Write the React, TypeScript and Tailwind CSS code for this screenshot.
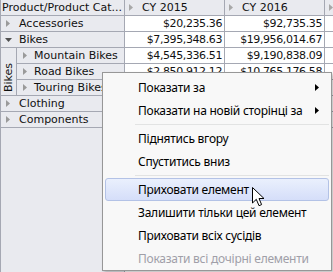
import React from "react";

const border = "border-[#a5a8b3]";

const RightTri = ({ color = "#9a9a9a" }: { color?: string }) => (
  <svg width="4" height="7" viewBox="0 0 4 7" className="shrink-0">
    <path d="M0 0 L4 3.5 L0 7 Z" fill={color} />
  </svg>
);

const DownTri = () => (
  <svg width="7" height="4" viewBox="0 0 7 4" className="shrink-0">
    <path d="M0 0 L7 0 L3.5 4 Z" fill="#505050" />
  </svg>
);

const RowLabel = ({ label, open }: { label: string; open?: boolean }) => (
  <div
    className={`flex h-[16px] items-center border-b ${border} bg-[#e9eaef] pl-[5px]`}
  >
    {open ? (
      <span className="ml-[-1px] mr-[7px]">
        <DownTri />
      </span>
    ) : (
      <span className="mr-[9px]">
        <RightTri />
      </span>
    )}
    <span className="whitespace-nowrap leading-none">{label}</span>
  </div>
);

const SubLabel = ({ label }: { label: string }) => (
  <div
    className={`flex h-[16px] items-center border-b ${border} bg-[#e9eaef] pl-[6px]`}
  >
    <span className="mr-[7px]">
      <RightTri />
    </span>
    <span className="whitespace-nowrap leading-none">{label}</span>
  </div>
);

const rows = [
  ["$20,235.36", "$92,735.35"],
  ["$7,395,348.63", "$19,956,014.67"],
  ["$4,545,336.51", "$9,190,838.09"],
  ["$2,850,912.12", "$10,765,176.58"],
  ["$1,481,100.12", "$3,879,178.92"],
  ["$34,376.34", "$1,015,398.44"],
  ["$11,799.08", "$1,424,117.29"],
];

const menuItems: (string | { label: string; sub?: boolean; hot?: boolean; off?: boolean })[] = [
  { label: "Показати за", sub: true },
  { label: "Показати на новій сторінці за", sub: true },
  "sep",
  { label: "Піднятись вгору" },
  { label: "Спуститись вниз" },
  "sep",
  { label: "Приховати елемент", hot: true },
  { label: "Залишити тільки цей елемент" },
  { label: "Приховати всіх сусідів" },
  { label: "Показати всі дочірні елементи", off: true },
];

const Cursor = () => (
  <svg width="13" height="20" viewBox="0 0 13 20">
    <path
      d="M0.5 0.5 L0.5 16 L4.3 12.3 L7 18.7 L9.6 17.6 L7 11.5 L12 11.5 Z"
      fill="#fff"
      stroke="#000"
      strokeWidth="1"
      strokeLinejoin="miter"
    />
  </svg>
);

export default function App() {
  return (
    <div className="relative h-[272px] w-[333px] overflow-hidden bg-white text-[11px] text-[#111] font-['DejaVu_Sans',sans-serif]">
      <div className="flex h-full">
        {/* row headers */}
        <div className={`flex w-[125px] shrink-0 flex-col border-r ${border} border-l bg-[#e9eaef]`}>
          <div className={`flex h-[16px] items-center border-b ${border} pl-[1px]`}>
            <span className="whitespace-nowrap leading-none">Product/Product Cat...</span>
          </div>
          <RowLabel label="Accessories" />
          <RowLabel label="Bikes" open />
          <div className="flex">
            <div
              className={`flex h-[48px] w-[16px] shrink-0 flex-col items-center justify-end border-r border-b ${border} pb-[3px]`}
            >
              <span className="rotate-180 leading-none [writing-mode:vertical-rl]">Bikes</span>
            </div>
            <div className="flex flex-1 flex-col">
              <SubLabel label="Mountain Bikes" />
              <SubLabel label="Road Bikes" />
              <SubLabel label="Touring Bikes" />
            </div>
          </div>
          <RowLabel label="Clothing" />
          <RowLabel label="Components" />
          <div className="flex-1" />
        </div>

        {/* data */}
        <div className="flex flex-1 flex-col">
          <div className={`flex h-[16px] border-b ${border} bg-[#e9eaef]`}>
            {["CY 2015", "CY 2016"].map((h) => (
              <div
                key={h}
                className={`flex w-[100px] shrink-0 items-center border-r ${border} pl-[4px]`}
              >
                <span className="mr-[9px]">
                  <RightTri color="#a8a8a8" />
                </span>
                <span className="whitespace-nowrap leading-none">{h}</span>
              </div>
            ))}
            <div className="flex flex-1 items-center pl-[4px]">
              <RightTri color="#a8a8a8" />
            </div>
          </div>
          {rows.map((r, i) => (
            <div key={i} className={`flex h-[16px] border-b ${border}`}>
              {r.map((v, j) => (
                <div
                  key={j}
                  className={`flex w-[100px] shrink-0 items-center justify-end border-r ${border} pr-[2px] tracking-[-0.4px]`}
                >
                  <span className="whitespace-nowrap leading-none">{v}</span>
                </div>
              ))}
              <div className="flex-1" />
            </div>
          ))}
        </div>
      </div>

      {/* context menu */}
      <div className="absolute left-[102px] top-[72px] w-[230px] border border-[#979797] bg-[#f8f8f8] pt-[3px] shadow-[2px_2px_3px_rgba(0,0,0,0.25)] font-['Noto_Sans',sans-serif] text-[12px] tracking-[-0.25px]">
        {menuItems.map((m, i) => {
          if (m === "sep")
            return (
              <div key={i} className="flex h-[5px] items-center pl-[32px] pr-[2px]">
                <div className="h-px w-full bg-[#e2e3e3]" />
              </div>
            );
          if (typeof m === "string") return null;
          return (
            <div
              key={i}
              className={`mx-[2px] flex h-[23px] items-center rounded-[3px] border pl-[32px] pr-[9px] ${
                m.hot
                  ? "border-[#b3c2e6] bg-gradient-to-b from-[#eaf0fd] to-[#d5def9]"
                  : "border-transparent"
              } ${m.off ? "text-[#a09fa8]" : "text-black"}`}
            >
              <span className="flex-1 whitespace-nowrap leading-none">{m.label}</span>
              {m.sub && (
                <svg width="4" height="7" viewBox="0 0 4 7">
                  <path d="M0 0 L4 3.5 L0 7 Z" fill="#000" />
                </svg>
              )}
            </div>
          );
        })}
      </div>

      <div className="absolute left-[252px] top-[187px]">
        <Cursor />
      </div>
    </div>
  );
}
